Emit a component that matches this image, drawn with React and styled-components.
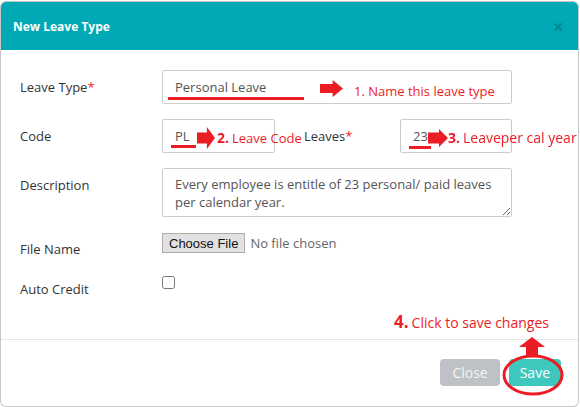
import React from "react";
import styled, { createGlobalStyle } from "styled-components";

const GlobalStyle = createGlobalStyle`
  html, body {
    margin: 0;
    padding: 0;
    background: #ffffff;
  }
  body {
    font-family: "Open Sans", "DejaVu Sans", sans-serif;
  }
  * {
    box-sizing: border-box;
  }
`;

const RED = "#ec1c24";

const Modal = styled.div`
  position: relative;
  width: 579px;
  height: 406px;
  margin-top: 1px;
  border: 1px solid rgba(0, 0, 0, 0.22);
  border-radius: 6px;
  overflow: hidden;
  background: #fff;
  display: flex;
  flex-direction: column;
`;

const Header = styled.div`
  height: 48px;
  flex: none;
  background: #00a9b5;
  display: flex;
  align-items: center;
  justify-content: space-between;
  padding: 0 14px 0 12px;
`;

const Title = styled.h4`
  margin: 0;
  color: #fff;
  font-size: 12px;
  font-weight: 700;
`;

const CloseX = styled.span`
  color: rgba(0, 0, 0, 0.2);
  font-size: 20px;
  font-weight: 700;
  line-height: 1;
  margin-top: 2px;
`;

const Body = styled.div`
  flex: 1;
  padding: 20px 19px 0;
`;

const Row = styled.div`
  display: flex;
  align-items: flex-start;
  margin-bottom: ${({ $gap }) => ($gap === undefined ? 15 : $gap)}px;
`;

const Label = styled.label`
  width: ${({ $width }) => $width || 142}px;
  margin-left: ${({ $offset }) => $offset || 0}px;
  flex: none;
  padding-top: 7px;
  line-height: 20px;
  font-size: 13px;
  color: #333;
`;

const Star = styled.span`
  color: ${RED};
`;

const TextInput = styled.input`
  width: ${({ $width }) => $width}px;
  height: 34px;
  border: 1px solid #ccc;
  border-radius: 2px;
  padding: 6px 12px;
  font-family: inherit;
  font-size: 13px;
  color: #555;
  outline: none;
`;

const TextArea = styled.textarea`
  width: 350px;
  height: 49px;
  border: 1px solid #ccc;
  border-radius: 2px;
  padding: 6px 12px;
  font-family: inherit;
  font-size: 13px;
  line-height: 18px;
  color: #555;
  outline: none;
`;

const FileInput = styled.input`
  font-family: "Open Sans", sans-serif;
  font-size: 13px;
  color: #666;
  margin: 1px 0 0;
  &::file-selector-button {
    font-family: "Liberation Sans", Arial, sans-serif;
    font-size: 13px;
    color: #111;
    height: 20px;
    padding: 0 6px;
    margin-right: 5px;
    background: #e1e1e1;
    border: 1px solid #adadad;
    border-radius: 0;
  }
`;

const Check = styled.input`
  width: 13px;
  height: 13px;
  margin: 4px 0 0;
`;

const Footer = styled.div`
  flex: none;
  height: 67px;
  border-top: 1px solid #e5e5e5;
  display: flex;
  justify-content: flex-end;
  align-items: flex-start;
  gap: 9px;
  padding: 19px 17px 0 0;
`;

const Button = styled.button`
  height: 27px;
  padding: 0 ${({ $pad }) => $pad}px;
  border: none;
  border-radius: 4px;
  background: ${({ $bg }) => $bg};
  color: ${({ $fg }) => $fg};
  font-family: inherit;
  font-size: 14px;
  line-height: 27px;
`;

/* callouts drawn over the form */
const Note = styled.div`
  position: absolute;
  left: ${({ $x }) => $x}px;
  top: ${({ $y }) => $y}px;
  color: ${RED};
  font-size: ${({ $size }) => $size || 13}px;
  line-height: 18px;
  white-space: nowrap;
  pointer-events: none;
`;

const Num = styled.b`
  font-size: ${({ $size }) => $size || 14}px;
  margin-right: 3px;
`;

const Mark = styled.div`
  position: absolute;
  left: ${({ $x }) => $x}px;
  top: ${({ $y }) => $y}px;
  width: ${({ $w }) => $w}px;
  height: 3px;
  background: ${RED};
`;

const Shape = styled.svg`
  position: absolute;
  left: ${({ $x }) => $x}px;
  top: ${({ $y }) => $y}px;
  overflow: visible;
`;

const RightArrow = ({ x, y, w, h, shaft }) => {
  const head = w * 0.45;
  const t = (h - shaft) / 2;
  return (
    <Shape $x={x} $y={y} width={w} height={h}>
      <path
        d={`M0 ${t} H${w - head} V0 L${w} ${h / 2} L${w - head} ${h} V${h - t} H0 Z`}
        fill={RED}
      />
    </Shape>
  );
};

const UpArrow = ({ x, y }) => (
  <Shape $x={x} $y={y} width={26} height={19}>
    <path d="M7 19 V10 H0 L13 0 L26 10 H19 V19 Z" fill={RED} />
  </Shape>
);

const Ring = () => (
  <Shape $x={502} $y={353} width={60} height={40}>
    <ellipse cx={30} cy={20} rx={29} ry={19} fill="none" stroke={RED} strokeWidth={3} />
  </Shape>
);

const App = () => {
  return (
    <>
      <GlobalStyle />
      <Modal>
        <Header>
          <Title>New Leave Type</Title>
          <CloseX>×</CloseX>
        </Header>

        <Body>
          <Row>
            <Label>
              Leave Type<Star>*</Star>
            </Label>
            <TextInput $width={350} value="Personal Leave" readOnly />
          </Row>

          <Row>
            <Label>Code</Label>
            <TextInput $width={113} value="PL" readOnly />
            <Label $offset={29} $width={96}>
              Leaves<Star>*</Star>
            </Label>
            <TextInput $width={112} value="23" readOnly />
          </Row>

          <Row>
            <Label>Description</Label>
            <TextArea
              readOnly
              value="Every employee is entitle of 23 personal/ paid leaves per calendar year."
            />
          </Row>

          <Row $gap={13}>
            <Label>File Name</Label>
            <FileInput type="file" />
          </Row>

          <Row>
            <Label>Auto Credit</Label>
            <Check type="checkbox" />
          </Row>
        </Body>

        <Footer>
          <Button $bg="#bec2c6" $fg="#f4f4f4" $pad={12}>
            Close
          </Button>
          <Button $bg="#3ec8bd" $fg="#ffffff" $pad={11}>
            Save
          </Button>
        </Footer>

        <Mark $x={167} $y={95} $w={136} />
        <RightArrow x={319} y={78} w={23} h={17} shaft={9} />
        <Note $x={353} $y={80}>1. Name this leave type</Note>

        <Mark $x={170} $y={143} $w={25} />
        <RightArrow x={196} y={125} w={18} h={22} shaft={11} />
        <Note $x={216} $y={127}>
          <Num>2.</Num>Leave Code
        </Note>

        <Mark $x={408} $y={144} $w={22} />
        <RightArrow x={427} y={127} w={20} h={18} shaft={11} />
        <Note $x={447} $y={127} $size={14}>
          <Num $size={14}>3.</Num>Leaveper cal year
        </Note>

        <Note $x={393} $y={311} $size={14}>
          <Num $size={17}>4.</Num>Click to save changes
        </Note>
        <UpArrow x={518} y={335} />
        <Ring />
      </Modal>
    </>
  );
};

export default App;
